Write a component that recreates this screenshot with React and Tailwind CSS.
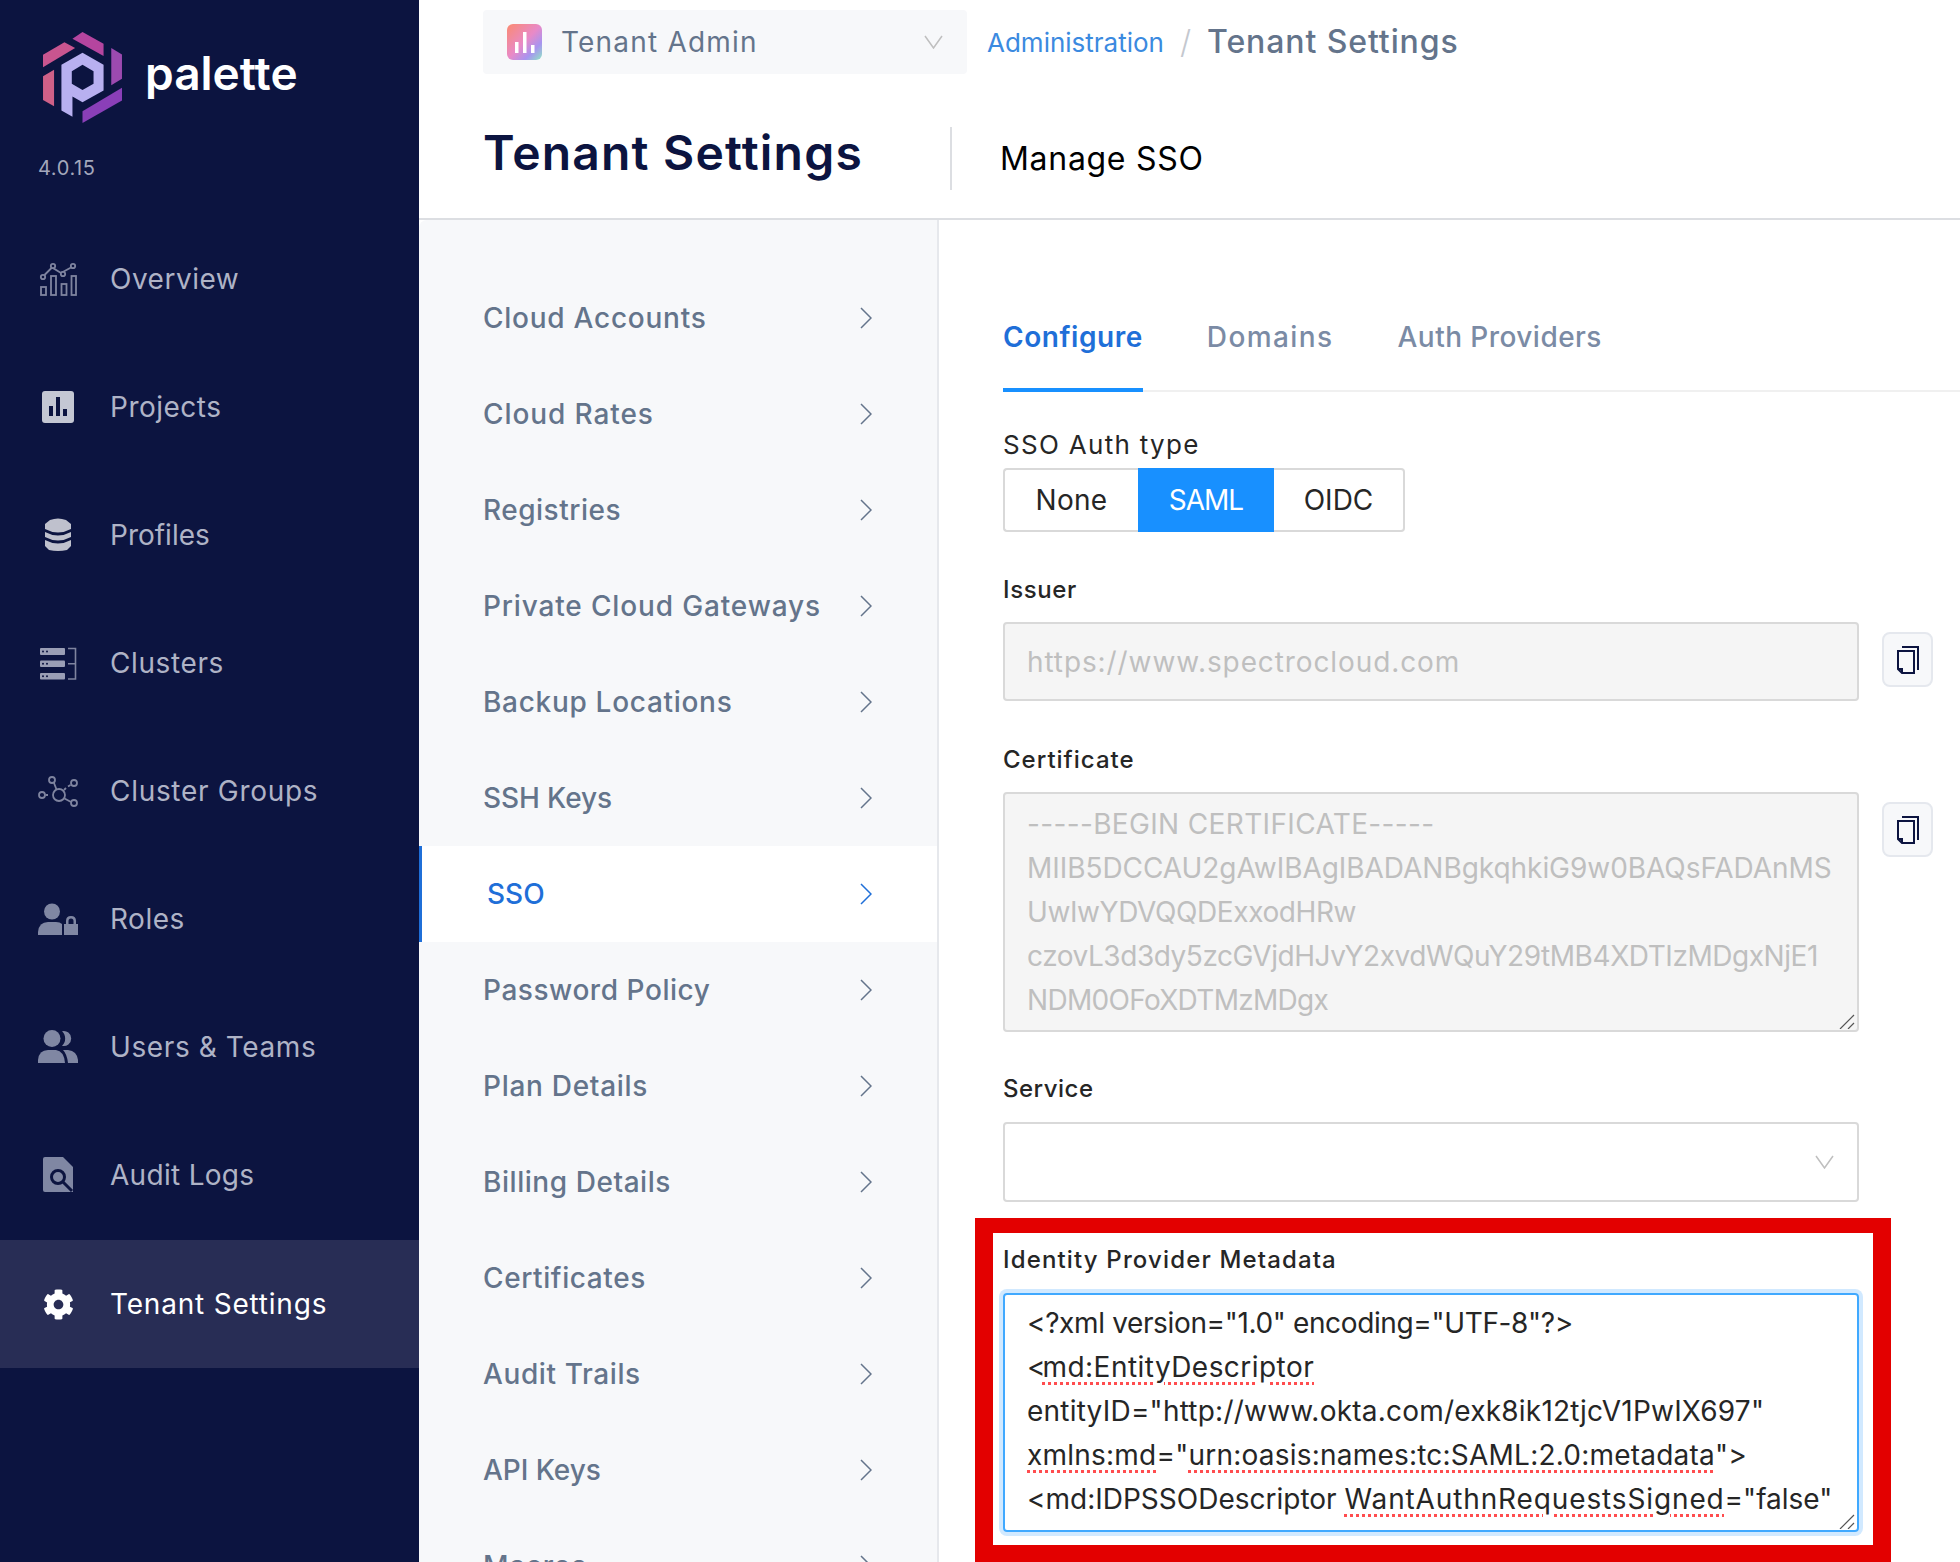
import React from 'react';
import { FaCog } from 'react-icons/fa';

const navItems = [
    { label: 'Overview', icon: OverviewIcon, cls: 'tracking-[0.5px]' },
    { label: 'Projects', icon: ProjectsIcon, cls: 'tracking-[0.5px]' },
    { label: 'Profiles', icon: ProfilesIcon, cls: 'tracking-[0px]' },
    { label: 'Clusters', icon: ClustersIcon, cls: 'tracking-[0.6px]' },
    { label: 'Cluster Groups', icon: GroupsIcon, cls: 'tracking-[0.7px]' },
    { label: 'Roles', icon: RolesIcon, cls: 'tracking-[0.5px]' },
    { label: 'Users & Teams', icon: UsersIcon, cls: 'tracking-[0.6px]' },
    { label: 'Audit Logs', icon: AuditIcon, cls: 'tracking-[0.3px]' },
];

const menuItems = [
    { label: 'Cloud Accounts', cls: 'tracking-[0.75px]' },
    { label: 'Cloud Rates', cls: 'tracking-[0.9px]' },
    { label: 'Registries', cls: 'tracking-[0.5px]' },
    { label: 'Private Cloud Gateways', cls: 'tracking-[0.85px]' },
    { label: 'Backup Locations', cls: 'tracking-[0.7px]' },
    { label: 'SSH Keys', cls: 'tracking-[-0.1px]' },
    { label: 'SSO', cls: '' },
    { label: 'Password Policy', cls: 'tracking-[0.55px]' },
    { label: 'Plan Details', cls: 'tracking-[0.7px]' },
    { label: 'Billing Details', cls: 'tracking-[0.55px]' },
    { label: 'Certificates', cls: 'tracking-[0.6px]' },
    { label: 'Audit Trails', cls: 'tracking-[0.6px]' },
    { label: 'API Keys', cls: 'tracking-[-0.05px]' },
    { label: 'Macros', cls: 'tracking-[0.7px]' },
];

const certLines = [
    { text: '-----BEGIN CERTIFICATE-----', cls: 'tracking-[0.35px]' },
    { text: 'MIIB5DCCAU2gAwIBAgIBADANBgkqhkiG9w0BAQsFADAnMS', cls: 'tracking-[-0.05px]' },
    { text: 'UwIwYDVQQDExxodHRw', cls: 'tracking-[-0.4px]' },
    { text: 'czovL3d3dy5zcGVjdHJvY2xvdWQuY29tMB4XDTIzMDgxNjE1', cls: 'tracking-[-0.45px]' },
    { text: 'NDM0OFoXDTMzMDgx', cls: 'tracking-[-0.7px]' },
];

function OverviewIcon() {
    return (
        <svg width="44" height="44" viewBox="0 0 44 44" fill="none" stroke="#7f849f" strokeWidth="1.8">
            <rect x="5" y="30" width="5" height="8" />
            <rect x="15" y="19" width="5" height="19" />
            <rect x="25.5" y="27" width="5" height="11" />
            <rect x="35.5" y="19" width="4.5" height="19" />
            <polyline points="8.5,18 16,10.5 25,16 35,10.5" />
            <circle cx="7" cy="20" r="2.2" fill="#0c1440" />
            <circle cx="17" cy="9" r="2.2" fill="#0c1440" />
            <circle cx="27" cy="17" r="2.2" fill="#0c1440" />
            <circle cx="37" cy="9" r="2.2" fill="#0c1440" />
        </svg>
    );
}

function ProjectsIcon() {
    return (
        <svg width="44" height="44" viewBox="0 0 44 44">
            <rect x="6" y="6" width="32" height="32" rx="3" fill="#c4c7d3" />
            <rect x="13" y="21" width="4" height="10" fill="#0c1440" />
            <rect x="20" y="12" width="4" height="19" fill="#0c1440" />
            <rect x="27" y="24" width="4" height="7" fill="#0c1440" />
        </svg>
    );
}

function ProfilesIcon() {
    return (
        <svg width="44" height="44" viewBox="0 0 44 44" fill="#bfc1cd">
            <path d="M9 11 L14 7 Q22 4 30 7 L35 11 V16 Q22 23 9 16 Z" />
            <path d="M9 19 Q22 26 35 19 V24 Q22 31 9 24 Z" />
            <path d="M9 27 Q22 34 35 27 V33 L31 37 Q22 39 13 37 L9 33 Z" />
        </svg>
    );
}

function ClustersIcon() {
    return (
        <svg width="44" height="44" viewBox="0 0 44 44">
            <rect x="4" y="7" width="25" height="7" rx="1" fill="#9a9eb5" />
            <rect x="4" y="19.5" width="25" height="6.5" rx="1" fill="#9a9eb5" />
            <rect x="4" y="32" width="25" height="6.5" rx="1" fill="#9a9eb5" />
            <circle cx="7" cy="10.5" r="1" fill="#0c1440" />
            <circle cx="11" cy="10.5" r="1" fill="#0c1440" />
            <circle cx="7" cy="22.8" r="1" fill="#0c1440" />
            <circle cx="11" cy="22.8" r="1" fill="#0c1440" />
            <circle cx="7" cy="35.2" r="1" fill="#0c1440" />
            <circle cx="11" cy="35.2" r="1" fill="#0c1440" />
            <path d="M32 7.5 H39.5 V38 H32 M32 22.8 H39.5" fill="none" stroke="#7f849f" strokeWidth="1.6" />
        </svg>
    );
}

function GroupsIcon() {
    return (
        <svg width="44" height="44" viewBox="0 0 44 44" fill="none" stroke="#7f849f" strokeWidth="1.8">
            <circle cx="23" cy="26" r="6" />
            <circle cx="16" cy="11" r="3" />
            <circle cx="38" cy="14" r="3" />
            <circle cx="38" cy="34" r="3" />
            <circle cx="6" cy="26" r="3" />
            <path d="M18 14 L20.5 20.5 M28 21 L30 19 M32 17.5 L34.5 16 M28.5 29.5 L35 33 M9.5 26 L12 26" />
        </svg>
    );
}

function RolesIcon() {
    return (
        <svg width="44" height="44" viewBox="0 0 44 44" fill="#8087a3">
            <circle cx="16" cy="14.5" r="8" />
            <path d="M2 38 V35 Q3 25 12 25 H20 Q24 25 26 27 V38 Z" />
            <path fillRule="evenodd" d="M28 27 H30 V24 Q30 19 35 19 Q40 19 40 24 V27 H42 V38 H28 Z M32.5 27 H37.5 V24 Q37.5 21.5 35 21.5 Q32.5 21.5 32.5 24 Z" />
        </svg>
    );
}

function UsersIcon() {
    return (
        <svg width="44" height="44" viewBox="0 0 44 44" fill="#8087a3">
            <circle cx="16" cy="13.5" r="8.5" />
            <path d="M26 6.2 A7.5 7.5 0 1 1 26 20.8 A10 10 0 0 0 26 6.2 Z" />
            <path d="M2 38 V35 Q3 25 12 25 H20 Q28 26 29 38 Z" />
            <path d="M27 25 H32 Q41 26 42 35 V38 H32 Q31 29 27 25 Z" />
        </svg>
    );
}

function AuditIcon() {
    return (
        <svg width="44" height="44" viewBox="0 0 44 44">
            <path d="M9 4 H27 L37 14 V39 H9 Q7 39 7 37 V6 Q7 4 9 4 Z" fill="#8087a3" />
            <circle cx="22" cy="24" r="6.5" fill="#8087a3" stroke="#0c1440" strokeWidth="3" />
            <path d="M27 29 L36 38" stroke="#0c1440" strokeWidth="3" />
        </svg>
    );
}

function Logo() {
    return (
        <svg width="79" height="91" viewBox="69 65 236 272">
            <path fill="#b5459f" d="M187 65 L250 100 V137 L157 85 Z" />
            <path fill="#c9558f" d="M133 96 L165 113 L69 170 V133 Z" />
            <path fill="#cf6088" d="M102 178 V287 L69 268 V197 Z" />
            <path fill="#9c4ab0" d="M273 113 L305 132 V205 L273 224 Z" />
            <path fill="#8a3fb8" d="M305 232 V270 L187 337 V302 Z" />
            <path fill="#b8b0f0" fillRule="evenodd" d="M187 127 L250 163 V240 L187 275 L157 258 V318 L124 300 V163 Z M187 163 L155 182 V220 L187 238 L220 220 V182 Z" />
        </svg>
    );
}

function TenantIcon() {
    return (
        <svg width="35" height="36" viewBox="0 0 35 36">
            <defs>
                <linearGradient id="tenantA" x1="0" y1="0" x2="1" y2="1">
                    <stop offset="0" stopColor="#fb8a70" />
                    <stop offset="0.5" stopColor="#e88ac8" />
                    <stop offset="0.75" stopColor="#a894f0" />
                    <stop offset="1" stopColor="#8fe6c4" />
                </linearGradient>
            </defs>
            <rect width="35" height="36" rx="6" fill="url(#tenantA)" />
            <rect x="8" y="18" width="3.5" height="11" fill="#fff" />
            <rect x="16" y="8" width="3.5" height="21" fill="#fff" />
            <rect x="24" y="21" width="3.5" height="8" fill="#fff" />
        </svg>
    );
}

function Chevron({ color = '#64748b' }) {
    return (
        <svg width="12" height="22" viewBox="0 0 12 22" fill="none" stroke={color} strokeWidth="1.5">
            <polyline points="1,1 11,11 1,21" />
        </svg>
    );
}

function DownArrow() {
    return (
        <svg width="19" height="14" viewBox="0 0 19 14" fill="none" stroke="#bfbfbf" strokeWidth="1.5">
            <polyline points="1,1 9.5,13 18,1" />
        </svg>
    );
}

function CopyButton() {
    return (
        <div className="w-[51px] h-[55px] mt-[10px] flex items-center justify-center rounded-lg border-2 border-[#e5e8ee] bg-[#f7f8fa]">
            <svg width="24" height="28" viewBox="0 0 24 28" fill="none" stroke="#0c1440" strokeWidth="2">
                <path d="M6 1 H22 V24" />
                <path d="M2 5 H18 V27 H6 L2 23 Z M2 23 H6 V27" />
            </svg>
        </div>
    );
}

function ResizeHandle() {
    return (
        <svg className="absolute right-[2px] bottom-[1px]" width="16" height="15" viewBox="0 0 16 15" stroke="#555" strokeWidth="1.2">
            <path d="M1 15 L15 1 M9 15 L15 9" />
        </svg>
    );
}

function Misspelled({ children, className = '' }) {
    return <span className={`underline decoration-dotted decoration-[#ff4d4f] decoration-[3px] underline-offset-[5px] ${className}`}>{children}</span>;
}

export default function App() {
    return (
        <div className="relative flex w-[1960px] h-[1562px] overflow-hidden bg-white [font-family:Inter,sans-serif]">
            {/* sidebar */}
            <aside className="w-[419px] shrink-0 bg-[#0c1440]">
                <div className="flex items-center gap-[23px] pl-[43px] pt-[32px]">
                    <Logo />
                    <span className="pb-[10px] text-[46px] leading-none font-semibold text-white">palette</span>
                </div>
                <div className="pl-[38px] mt-[31px] text-[20px] leading-[28px] tracking-[0.6px] text-[#a3a7bb]">4.0.15</div>
                <nav className="mt-[33px]">
                    {navItems.map(({ label, icon: Icon, cls }) => (
                        <div key={label} className={`flex items-center h-[128px] pl-[36px] gap-[30px] text-[28px] text-[#afb3c6] ${cls}`}>
                            <Icon />
                            <span>{label}</span>
                        </div>
                    ))}
                    <div className="flex items-center h-[128px] mt-[1px] pl-[36px] gap-[30px] text-[28px] tracking-[0.8px] bg-[#282d55] text-white">
                        <div className="w-[44px] flex justify-center"><FaCog size={31} /></div>
                        <span>Tenant Settings</span>
                    </div>
                </nav>
            </aside>

            <main className="flex-1 min-w-0 flex flex-col">
                {/* page header */}
                <header className="h-[220px] shrink-0 pl-[64px] border-b-2 border-[#dcdee2]">
                    <div className="flex items-center pt-[10px]">
                        <div className="w-[484px] h-[64px] flex items-center pl-[24px] pr-[24px] gap-[19px] rounded bg-[#f7f8fa]">
                            <TenantIcon />
                            <span className="flex-1 text-[28px] tracking-[1.2px] text-[#64748b]">Tenant Admin</span>
                            <DownArrow />
                        </div>
                        <span className="ml-[20px] text-[26px] text-[#3b8ae0]">Administration</span>
                        <span className="mx-[16px] text-[32px] text-[#c4c8cf] font-light">/</span>
                        <span className="text-[32px] font-medium tracking-[0.9px] text-[#64748b]">Tenant Settings</span>
                    </div>
                    <div className="flex items-center h-[63px] mt-[53px]">
                        <h1 className="w-[467px] pb-[11px] text-[48px] font-semibold tracking-[1.2px] text-[#0c1440]">Tenant Settings</h1>
                        <div className="h-full flex items-center pl-[48px] border-l-2 border-[#dcdee2] text-[32px] tracking-[0.7px] text-black">Manage SSO</div>
                    </div>
                </header>

                <div className="flex-1 min-h-0 flex">
                    {/* settings menu */}
                    <div className="w-[520px] shrink-0 pt-[50px] bg-[#f7f8fa] border-r-2 border-[#e6e8ec] rounded-tl-lg">
                        {menuItems.map(({ label, cls }) => label === 'SSO' ? (
                            <div key={label} className="flex items-center justify-between h-[96px] pl-[65px] pr-[65px] border-l-[3px] border-[#1f6fd8] bg-white text-[28px] font-medium text-[#1f6fd8]">
                                <span>{label}</span>
                                <Chevron color="#1f6fd8" />
                            </div>
                        ) : (
                            <div key={label} className="flex items-center justify-between h-[96px] shrink-0 pl-[64px] pr-[65px] text-[28px] font-medium text-[#64748b]">
                                <span className={cls}>{label}</span>
                                <Chevron />
                            </div>
                        ))}
                    </div>

                    {/* SSO form */}
                    <section className="flex-1 min-w-0 pt-[95px]">
                        <div className="ml-[64px] flex gap-[64px] h-[77px] border-b-2 border-[#f0f0f0]">
                            <div className="h-[77px] leading-[44px] text-[28px] font-semibold tracking-[0.55px] text-[#1f6fd8] border-b-4 border-[#1890ff]">Configure</div>
                            <div className="leading-[44px] text-[28px] font-medium tracking-[1.4px] text-[#7b8ba5]">Domains</div>
                            <div className="leading-[44px] text-[28px] font-medium tracking-[0.45px] text-[#7b8ba5]">Auth Providers</div>
                        </div>

                        <div className="pl-[64px]">
                            <div className="mt-[35px] mb-[5px] text-[26px] leading-[36px] tracking-[1.3px] text-[#262626]">SSO Auth type</div>
                            <div className="flex w-[402px] h-[64px] text-[28px] text-[#262626]">
                                <div className="w-[135px] flex items-center justify-center border-2 border-r-0 border-[#d9d9d9] rounded-l tracking-[0.3px]">None</div>
                                <div className="w-[136px] flex items-center justify-center bg-[#1890ff] text-white tracking-[-1px]">SAML</div>
                                <div className="w-[131px] flex items-center justify-center border-2 border-l-0 border-[#d9d9d9] rounded-r">OIDC</div>
                            </div>

                            <div className="mt-[42px] mb-[16px] text-[24px] leading-[32px] font-medium tracking-[0.6px] text-[#262626]">Issuer</div>
                            <div className="flex gap-[23px]">
                                <div className="w-[856px] h-[79px] flex items-center pl-[22px] border-2 border-[#d9d9d9] rounded bg-[#f5f5f5] text-[28px] tracking-[0.9px] text-[#bfbfbf]">https://www.spectrocloud.com</div>
                                <CopyButton />
                            </div>

                            <div className="mt-[43px] mb-[16px] text-[24px] leading-[32px] font-medium tracking-[1px] text-[#262626]">Certificate</div>
                            <div className="flex gap-[23px]">
                                <div className="relative w-[856px] h-[240px] pl-[22px] pt-[8px] border-2 border-[#d9d9d9] rounded bg-[#f5f5f5] text-[28px] leading-[44px] text-[#bfbfbf]">
                                    {certLines.map((line) => <div key={line.text} className={`whitespace-nowrap ${line.cls}`}>{line.text}</div>)}
                                    <ResizeHandle />
                                </div>
                                <CopyButton />
                            </div>

                            <div className="mt-[41px] mb-[17px] text-[24px] leading-[32px] font-medium tracking-[0.5px] text-[#262626]">Service</div>
                            <div className="w-[856px] h-[80px] flex items-center justify-end pr-[23px] border-2 border-[#d9d9d9] rounded">
                                <DownArrow />
                            </div>

                            <div className="mt-[42px] mb-[17px] text-[24px] leading-[32px] font-medium tracking-[1.15px] text-[#262626]">Identity Provider Metadata</div>
                            <div className="relative w-[856px] h-[239px] pl-[22px] pt-[6px] border-2 border-[#40a9ff] rounded ring-4 ring-[#d1e9ff] text-[28px] leading-[44px] text-[#262626] whitespace-nowrap">
                                <div className="tracking-[-0.36px]">{'<?xml version="1.0" encoding="UTF-8"?>'}</div>
                                <div><span className="tracking-[-3px]">{'<'}</span><Misspelled className="tracking-[0.45px]">md:EntityDescriptor</Misspelled></div>
                                <div className="tracking-[0.22px]">{'entityID="http://www.okta.com/exk8ik12tjcV1PwIX697"'}</div>
                                <div className="tracking-[0.22px]"><Misspelled>xmlns:md</Misspelled>{'="'}<Misspelled>urn:oasis:names:tc:SAML:2.0:metadata</Misspelled>{'">'}</div>
                                <div>{'<md:IDPSSODescriptor '}<Misspelled className="tracking-[0.87px]">WantAuthnRequestsSigned</Misspelled>{'="false"'}</div>
                                <ResizeHandle />
                            </div>
                        </div>
                    </section>
                </div>
            </main>

            {/* red annotation frame */}
            <div className="absolute left-[975px] top-[1218px] w-[916px] h-[344px] border-x-[18px] border-t-[15px] border-b-[17px] border-[#e30000] pointer-events-none" />
        </div>
    );
}
